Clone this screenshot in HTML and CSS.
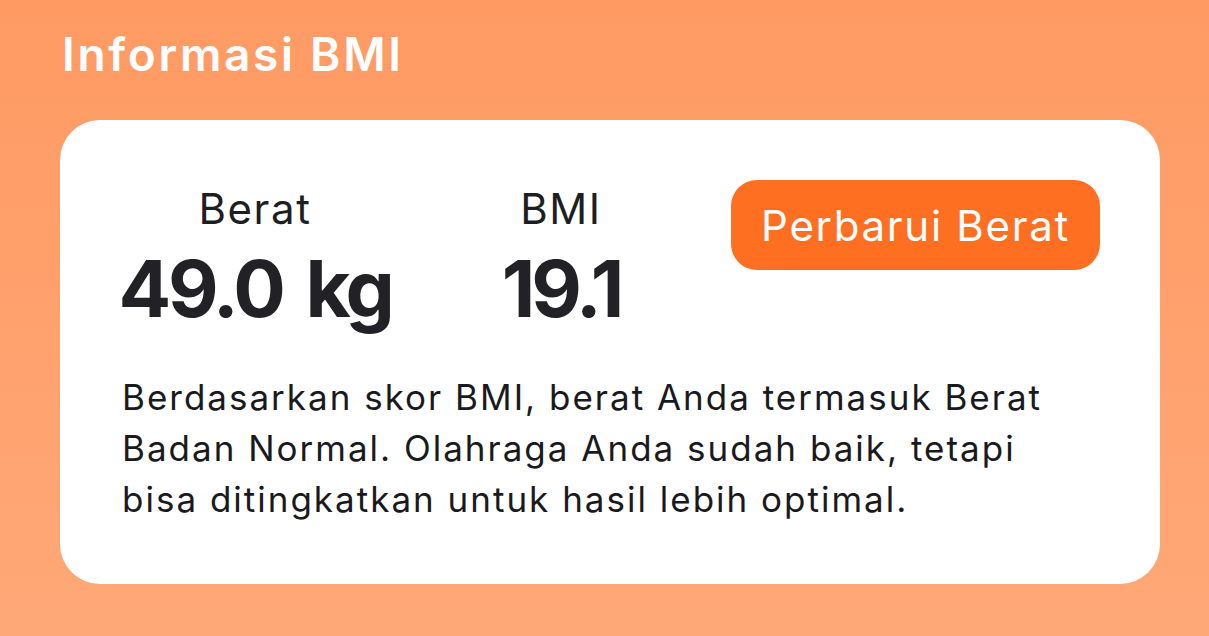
FILE: index.html
```html
<!DOCTYPE html>
<html lang="id">
<head>
<meta charset="utf-8">
<title>Informasi BMI</title>
<link rel="stylesheet" href="styles.css">
</head>
<body>
<main class="page">
  <h1 class="title">Informasi BMI</h1>
  <section class="card">
    <div class="top-row">
      <div class="stats">
        <div class="stat stat-weight">
          <div class="stat-label">Berat</div>
          <div class="stat-value">49.0 kg</div>
        </div>
        <div class="stat stat-bmi">
          <div class="stat-label">BMI</div>
          <div class="stat-value stat-value-tight">19.1</div>
        </div>
      </div>
      <button class="update-btn" type="button">Perbarui Berat</button>
    </div>
    <p class="desc">Berdasarkan skor BMI, berat Anda termasuk Berat Badan Normal. Olahraga Anda sudah baik, tetapi bisa ditingkatkan untuk hasil lebih optimal.</p>
  </section>
</main>
</body>
</html>
```

FILE: styles.css
```css
* { box-sizing: border-box; }
html, body { margin: 0; padding: 0; }
body {
  width: 1209px;
  height: 636px;
  overflow: hidden;
  background: linear-gradient(180deg, #ff9a63 0%, #ffa877 100%);
  font-family: Inter, "Noto Sans", sans-serif;
  color: #1e1e22;
}
.page {
  padding: 25px 49px 0 60px;
}
.title {
  margin: 0 0 0 2px;
  font-size: 46px;
  font-weight: 600;
  line-height: 58px;
  color: #ffffff;
  letter-spacing: 2.7px;
}
.card {
  margin-top: 37px;
  width: 1100px;
  height: 464px;
  background: #ffffff;
  border-radius: 40px;
  padding: 60px 60px 0 62px;
}
.top-row {
  display: flex;
  align-items: flex-start;
  justify-content: space-between;
}
.stats {
  display: flex;
  gap: 114px;
}
.stat {
  display: flex;
  flex-direction: column;
  align-items: center;
}
.stat-weight { width: 266px; }
.stat-bmi { width: 118px; }
.stat-label {
  margin-top: 4px;
  font-size: 42px;
  line-height: 50px;
  font-weight: 400;
  letter-spacing: 1.6px;
  color: #1e1e22;
}
.stat-value {
  margin-top: 12px;
  font-size: 78px;
  line-height: 86px;
  font-weight: 700;
  letter-spacing: -3.4px;
  word-spacing: 8px;
  color: #222226;
  white-space: nowrap;
}
.stat-value-tight {
  letter-spacing: -4px;
}
.update-btn {
  width: 369px;
  height: 90px;
  border: none;
  border-radius: 26px;
  background: #ff6f22;
  color: #ffffff;
  font-family: inherit;
  font-size: 42px;
  font-weight: 400;
  letter-spacing: 1.7px;
  padding: 0;
}
.desc {
  margin: 40px 0 0 0;
  width: 950px;
  font-size: 35px;
  line-height: 51px;
  font-weight: 400;
  letter-spacing: 2px;
  color: #1a1a1e;
}
```
